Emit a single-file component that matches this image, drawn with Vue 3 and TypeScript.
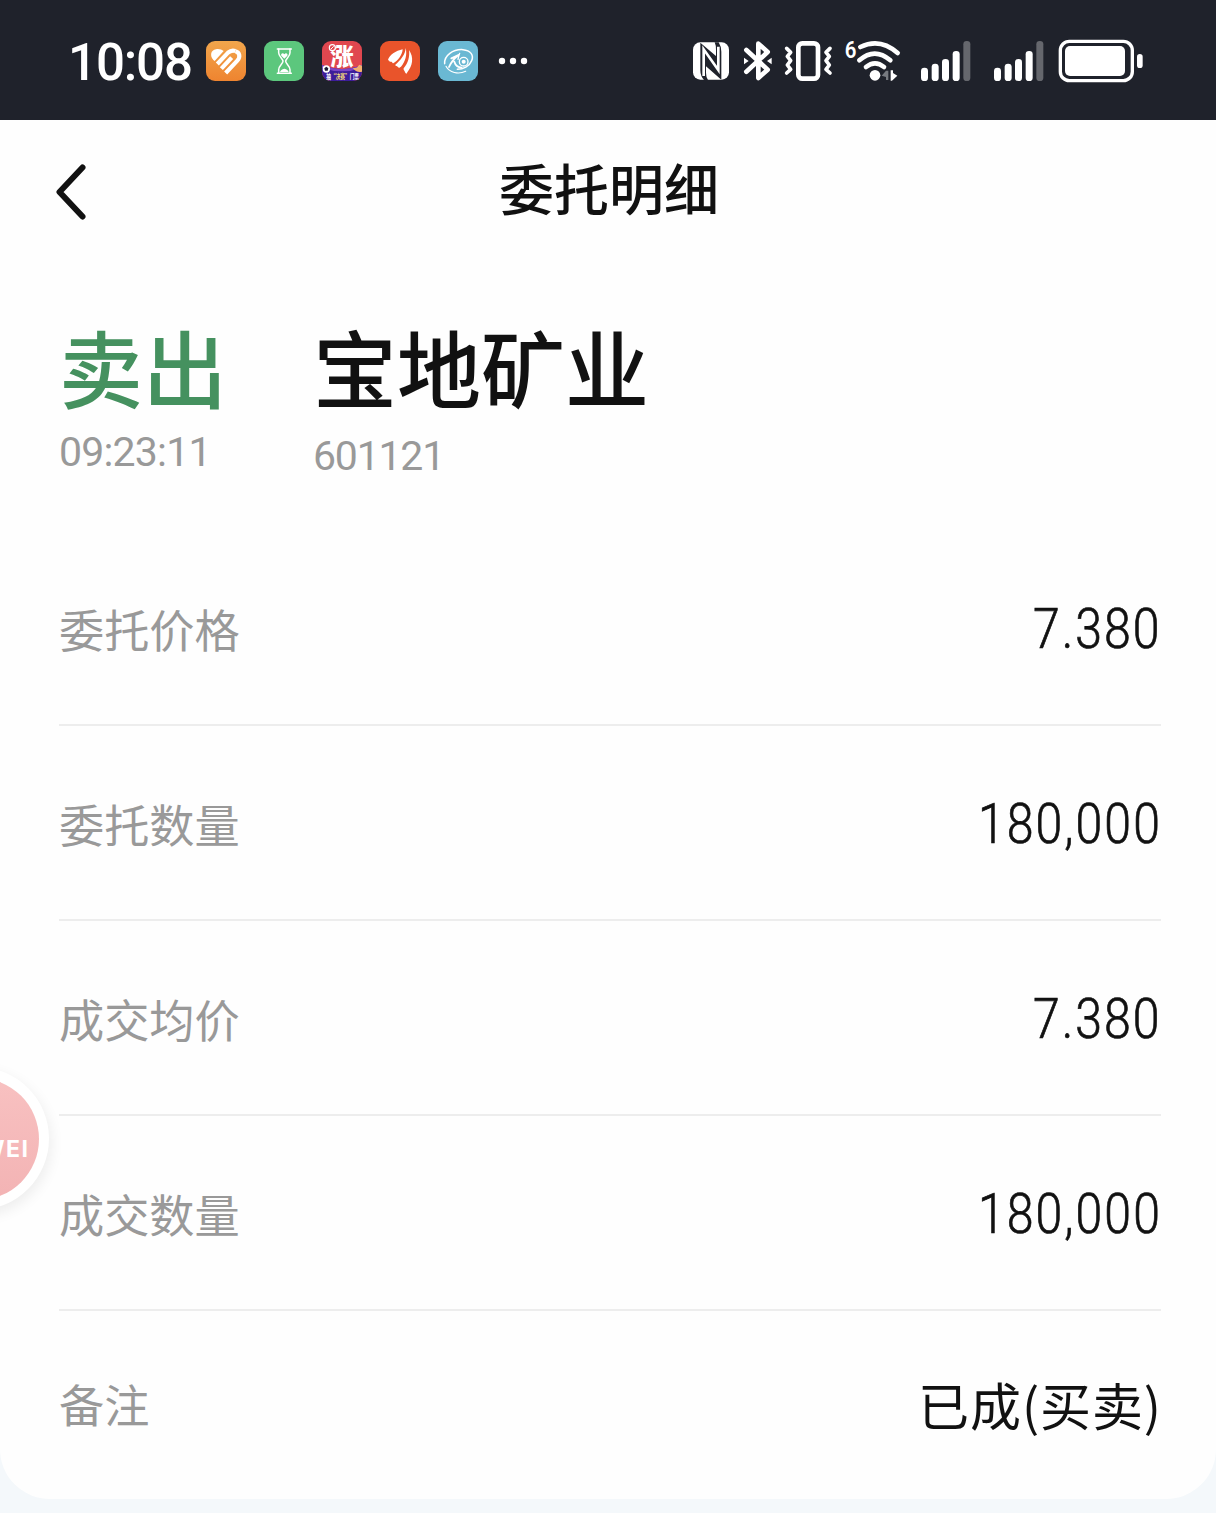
<script setup lang="ts">
interface Row {
  label: string
  value: string
  numeric: boolean
}

const rows: Row[] = [
  { label: '委托价格', value: '7.380', numeric: true },
  { label: '委托数量', value: '180,000', numeric: true },
  { label: '成交均价', value: '7.380', numeric: true },
  { label: '成交数量', value: '180,000', numeric: true },
  { label: '备注', value: '已成(买卖)', numeric: false },
]
</script>

<template>
  <div class="screen">
    <div class="status">
      <span class="clock">10:08</span>
      <div class="apps">
        <svg class="app" viewBox="0 0 120 120">
          <defs>
            <linearGradient id="orange" x1="0" y1="0" x2="0" y2="1">
              <stop offset="0" stop-color="#f2a64c" />
              <stop offset="1" stop-color="#ee8430" />
            </linearGradient>
          </defs>
          <rect width="120" height="120" rx="27" fill="url(#orange)" />
          <path d="M22 57C11 45 14 27 30 25C39 23 47 26 53 30L26 60Z" fill="#fff" />
          <g fill="none" stroke="#fff" stroke-width="12.500">
            <path d="M34 69L66 35C74 28 82 28 88 30" />
            <path d="M46 83L77 50" />
            <path d="M59 96L94 59C104 48 101 34 88 31" />
          </g>
        </svg>
        <svg class="app" viewBox="0 0 120 120">
          <rect width="120" height="120" rx="27" fill="#5cc77d" />
          <g fill="none" stroke="#fff" stroke-width="4.5" stroke-linecap="round" stroke-linejoin="round">
            <path d="M40 24H82M40 97H82" />
            <path d="M44 24V35C44 47 57 53 57 60.500C57 68 44 74 44 86V97M78 24V35C78 47 65 53 65 60.500C65 68 78 74 78 86V97" />
          </g>
          <path d="M61 53L52 44C49 38 57 34 61 40C65 34 73 38 70 44ZM48 93Q50 85 61 83Q72 85 74 93Z" fill="#fff" />
        </svg>
        <svg class="app" viewBox="0 0 120 120">
          <defs>
            <clipPath id="tile"><rect width="120" height="120" rx="27" /></clipPath>
          </defs>
          <g clip-path="url(#tile)">
            <rect width="120" height="120" fill="#e0474f" />
            <path d="M0 72Q60 96 120 72V120H0Z" fill="#3c1d9b" />
            <path d="M0 72Q60 96 120 72V80Q60 102 0 80Z" fill="#7c46c5" />
            <path d="M92 82L104 80L112 71L120 74V92Q104 96 92 82Z" fill="#f3b06e" />
            <circle cx="13" cy="84" r="11" fill="#fff" />
            <path d="M13 77L19 82L17 89H9L7 82Z" fill="#1c1b35" />
          </g>
          <text x="25" y="73" class="rise" textLength="70" lengthAdjust="spacingAndGlyphs">涨</text>
          <circle cx="31" cy="20" r="9" fill="#e0474f" stroke="#fff" stroke-width="3.500" />
          <path d="M27 24L35 16" stroke="#fff" stroke-width="3" />
          <text x="13" y="113" class="promo" textLength="98" lengthAdjust="spacingAndGlyphs">抽<tspan fill="#f7dc7a">“决赛”</tspan>门票</text>
        </svg>
        <svg class="app" viewBox="0 0 120 120">
          <rect width="120" height="120" rx="27" fill="#e9542b" />
          <g fill="#fff">
            <path d="M68 25C48 29 27 43 24 57C29 58 27 64 33 62C39 61 35 69 41 66C53 59 67 43 68 25Z" />
            <path d="M77 21C76 40 62 58 46 71C46 77 52 74 54 78C56 83 60 79 63 77C76 62 82 41 77 21Z" />
            <path d="M87 27C90 46 84 67 71 82C69 87 74 88 75 94C78 99 80 100 82 94C97 75 103 50 87 27Z" />
          </g>
        </svg>
        <svg class="app" viewBox="0 0 120 120">
          <rect width="120" height="120" rx="27" fill="#6ab8d3" />
          <g fill="none" stroke="#fff" stroke-linecap="round">
            <path d="M20 68C18 44 45 24 75 26C98 28 108 43 101 59C94 76 76 85 58 85" stroke-width="4.500" />
            <path d="M24 76C34 95 61 101 83 91" stroke-width="3.500" />
            <path d="M40 52L61 42M61 42C48 53 38 66 33 78M49 62C52 72 61 79 71 80" stroke-width="5.500" />
            <path d="M65 37C63 42 61 48 60 55" stroke-width="4" />
            <circle cx="77" cy="62" r="13" stroke-width="4" />
          </g>
          <circle cx="77" cy="62" r="6" fill="#fff" />
        </svg>
      </div>
      <svg class="more" viewBox="0 0 30 8">
        <g fill="#fff"><circle cx="4" cy="4" r="3.200" /><circle cx="15" cy="4" r="3.200" /><circle cx="26" cy="4" r="3.200" /></g>
      </svg>
      <div class="system">
        <svg class="nfc" viewBox="36 60 114 126">
          <rect x="39" y="67" width="108" height="112" rx="22" fill="#fff" />
          <path d="M61 68L108 108V90Q108 75 104 67H116Q124 80 124 95V179L78 139V158Q78 172 84 180H72Q61 168 61 150Z" fill="#1f222b" />
          <path d="M71 168V88L115 150V80" fill="none" stroke="#fff" stroke-width="8" />
        </svg>
        <svg class="bluetooth" viewBox="189 60 90 126">
          <path d="M199 90L263 149L235 174V71L263 96L199 155" fill="none" stroke="#fff" stroke-width="14" stroke-linejoin="round" stroke-linecap="round" />
          <path d="M192 113L206 123L192 133ZM275 113L261 123L275 133Z" fill="#fff" />
        </svg>
        <svg class="vibrate" viewBox="312 60 147 126">
          <g fill="none" stroke="#fff" stroke-linecap="round" stroke-linejoin="round">
            <rect x="355" y="70" width="59" height="106" rx="12" stroke-width="14" />
            <path d="M320 85L332 97L322 109L332 122L322 135L332 148L320 159M450 85L438 97L448 109L438 122L448 135L438 148L450 159" stroke-width="11" />
          </g>
        </svg>
        <svg class="wifi" viewBox="495 60 165 126">
          <text x="494" y="114" class="gen" textLength="35" lengthAdjust="spacingAndGlyphs">6</text>
          <g fill="none" stroke="#fff" stroke-width="14" stroke-linecap="round">
            <path d="M541 81Q600 52 653 99" />
            <path d="M538 121Q584 81 631 121" />
            <path d="M558 141Q585 119 612 141" />
          </g>
          <circle cx="585" cy="166" r="16" fill="#fff" />
          <path d="M605 167L618 152H625V180H618V171Z" fill="#777a80" />
          <path d="M632 151H639V159L652 167L636 182H632Z" fill="#fff" />
        </svg>
        <svg v-for="n in 2" :key="n" class="signal" :class="{ second: n === 2 }" viewBox="60 60 153 126">
          <g fill="#fff">
            <rect x="63" y="143" width="21" height="40" rx="10" />
            <rect x="95" y="131" width="21" height="52" rx="10" />
            <rect x="126" y="117" width="21" height="66" rx="10" />
            <rect x="158" y="93" width="21" height="90" rx="10" />
          </g>
          <rect x="190" y="63" width="21" height="120" rx="10" fill="#65676d" />
        </svg>
        <svg class="battery" viewBox="474 57 258 132">
          <rect x="481" y="64" width="216" height="118" rx="27" fill="none" stroke="#fff" stroke-width="10" />
          <rect x="495" y="78" width="180" height="90" rx="15" fill="#fff" />
          <rect x="711" y="102" width="17" height="42" rx="8.500" fill="#fff" />
        </svg>
      </div>
    </div>

    <main class="card">
      <header class="nav">
        <svg class="back" viewBox="0 0 34 60">
          <path d="M28.500 5.500L5.500 30L28.500 54.500" fill="none" stroke="#111" stroke-width="6" stroke-linecap="round" stroke-linejoin="round" />
        </svg>
        <h1 class="title">委托明细</h1>
      </header>

      <section class="summary">
        <div class="side">
          <div class="big sell">卖出</div>
          <div class="sub">09:23:11</div>
        </div>
        <div class="stock">
          <div class="big">宝地矿业</div>
          <div class="sub code">601121</div>
        </div>
      </section>

      <section class="rows">
        <div v-for="row in rows" :key="row.label" class="row">
          <span class="label">{{ row.label }}</span>
          <span class="value" :class="{ num: row.numeric }">{{ row.value }}</span>
        </div>
      </section>
    </main>

    <div class="floating">
      <div class="logo"><span class="brand">HUAWEI</span></div>
    </div>
  </div>
</template>

<style>
body {
  margin: 0;
  background: #f4f8fb;
}
</style>

<style scoped>
.screen {
  position: relative;
  width: 1216px;
  height: 1513px;
  overflow: hidden;
  background: #f4f8fb;
  font-family: "Noto Sans CJK SC", sans-serif;
  color: #111;
}

.screen svg {
  display: block;
  flex: none;
  overflow: visible;
}

.status {
  display: flex;
  align-items: center;
  box-sizing: border-box;
  height: 120px;
  padding: 2px 72px 0 68px;
  background: #1f222b;
}

.clock {
  width: 138px;
  padding-top: 3px;
  font: 500 51px/60px Roboto, sans-serif;
  letter-spacing: -1.1px;
  color: #fff;
}

.apps {
  display: flex;
  gap: 18px;
}

.app {
  width: 40px;
  height: 40px;
}

.rise {
  font: 900 70px "Noto Sans CJK SC", sans-serif;
  fill: #fff;
}

.promo {
  font: 700 19px "Noto Sans CJK SC", sans-serif;
  fill: #fff;
}

.more {
  width: 30px;
  height: 8px;
  margin-left: 20px;
}

.system {
  display: flex;
  align-items: center;
  margin-left: auto;
}

.nfc {
  width: 38px;
  height: 42px;
}

.bluetooth {
  width: 30px;
  height: 42px;
  margin-left: 13px;
}

.vibrate {
  width: 49px;
  height: 42px;
  margin-left: 11px;
}

.wifi {
  width: 55px;
  height: 42px;
  margin-left: 12px;
}

.gen {
  font: 600 72px Roboto, sans-serif;
  fill: #fff;
}

.signal {
  width: 51px;
  height: 42px;
  margin-left: 20px;
}

.signal.second {
  margin-left: 22px;
}

.battery {
  width: 86px;
  height: 44px;
  margin-left: 14px;
}

.card {
  height: 1379px;
  background: #fefefe;
  border-radius: 0 0 50px 50px;
}

.nav {
  display: grid;
  grid-template-columns: 1fr auto 1fr;
  align-items: center;
  height: 131px;
}

.back {
  width: 34px;
  height: 60px;
  margin: 12px 0 0 54px;
}

.title {
  margin: 0;
  padding-left: 2px;
  font-size: 55px;
  line-height: 80px;
  font-weight: 500;
}

.summary {
  display: flex;
  box-sizing: border-box;
  height: 280px;
  padding: 73px 59px 0;
}

.side {
  width: 254px;
}

.big {
  font-size: 84px;
  line-height: 84px;
  font-weight: 500;
  white-space: nowrap;
}

.sell {
  color: #45915f;
}

.sub {
  margin-top: 19px;
  font: 400 41px/50px Roboto, sans-serif;
  letter-spacing: -0.8px;
  color: #999;
}

.code {
  margin-top: 23px;
  letter-spacing: -1.2px;
}

.rows {
  padding: 0 55px 0 59px;
}

.row {
  display: flex;
  align-items: center;
  justify-content: space-between;
  box-sizing: border-box;
  height: 195px;
  padding-top: 2px;
  border-bottom: 2px solid #ededed;
}

.row:last-child {
  height: 184px;
  border-bottom: 0;
}

.label {
  font-size: 45.2px;
  line-height: 60px;
  color: #999;
}

.value {
  margin-right: -1px;
  font-size: 51px;
  line-height: 60px;
  letter-spacing: 0.9px;
}

/* Condensed light figures with open tracking */
.value.num {
  margin-right: -1px;
  font-family: Roboto, sans-serif;
  font-size: 56px;
  font-weight: 300;
  letter-spacing: 2.4px;
  -webkit-text-stroke: 0.7px #111;
  transform: scaleX(0.86);
  transform-origin: right center;
}

.floating {
  position: absolute;
  left: -94px;
  top: 1067px;
  display: flex;
  align-items: center;
  justify-content: center;
  width: 143px;
  height: 143px;
  border-radius: 50%;
  background: #fff;
  box-shadow: 2px 5px 14px rgba(0, 0, 0, 0.07);
}

.logo {
  display: flex;
  align-items: center;
  justify-content: flex-end;
  box-sizing: border-box;
  width: 122px;
  height: 122px;
  padding: 21px 9px 0 0;
  border-radius: 50%;
  background: linear-gradient(#f8c1c1, #f3b3b4);
}

.brand {
  font: 700 23px/28px Inter, sans-serif;
  letter-spacing: 1.5px;
  color: #fff;
}
</style>
